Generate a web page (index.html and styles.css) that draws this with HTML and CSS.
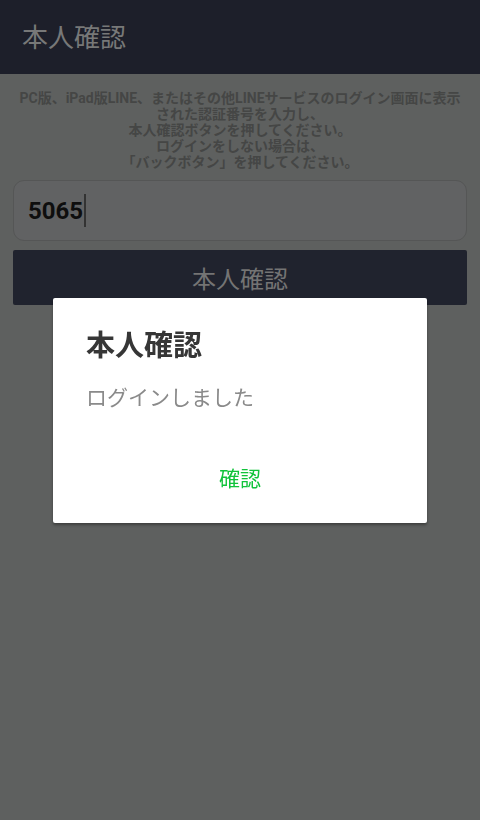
FILE: index.html
```html
<!DOCTYPE html>
<html lang="ja">
<head>
<meta charset="utf-8">
<link rel="stylesheet" href="styles.css">
</head>
<body>
<div class="page">
  <header class="appbar">本人確認</header>
  <main class="content">
    <p class="desc">PC版、iPad版LINE、またはその他LINEサービスのログイン画面に表示<br>された認証番号を入力し、<br>本人確認ボタンを押してください。<br>ログインをしない場合は、<br>「バックボタン」を押してください。</p>
    <div class="field"><span class="code">5065</span><span class="caret"></span></div>
    <div class="btn">本人確認</div>
  </main>
</div>
<div class="overlay">
  <div class="dialog">
    <h2 class="dlg-title">本人確認</h2>
    <p class="dlg-msg">ログインしました</p>
    <div class="dlg-actions"><span class="dlg-btn">確認</span></div>
  </div>
</div>
</body>
</html>
```
FILE: styles.css
```css
html, body {
  margin: 0;
  padding: 0;
  height: 100%;
}
body {
  background: #5e605f;
  font-family: "Roboto", "Noto Sans CJK JP", sans-serif;
  width: 480px;
  height: 820px;
  overflow: hidden;
}
.page {
  display: flex;
  flex-direction: column;
}
.appbar {
  height: 74px;
  background: #1d1f2a;
  color: #777878;
  font-family: "Noto Sans CJK JP", sans-serif;
  font-size: 26px;
  display: flex;
  align-items: center;
  padding-left: 22px;
  padding-bottom: 3px;
  box-sizing: border-box;
}
.content {
  padding: 16px 13px 0 13px;
  display: flex;
  flex-direction: column;
}
.desc {
  margin: 0;
  text-align: center;
  color: #454645;
  font-weight: bold;
  font-size: 14px;
  line-height: 16px;
  font-family: "Roboto", "Noto Sans CJK JP", sans-serif;
}
.field {
  margin-top: 10px;
  height: 61px;
  box-sizing: border-box;
  border: 1px solid #555656;
  border-radius: 11px;
  background: #616263;
  display: flex;
  align-items: center;
  padding-left: 14px;
}
.code {
  font-family: "Roboto", sans-serif;
  font-weight: bold;
  font-size: 24px;
  color: #0e0e0e;
}
.caret {
  width: 2px;
  height: 33px;
  background: #333;
  margin-left: 1px;
}
.btn {
  margin-top: 9px;
  height: 55px;
  background: #20232e;
  border-radius: 2px;
  color: #747474;
  font-family: "Noto Sans CJK JP", sans-serif;
  font-size: 24px;
  display: flex;
  align-items: center;
  justify-content: center;
}
.overlay {
  position: fixed;
  inset: 0;
  display: flex;
  align-items: center;
  justify-content: center;
}
.dialog {
  width: 374px;
  height: 225px;
  background: #fff;
  border-radius: 2px;
  box-shadow: 0 2px 3px rgba(0,0,0,0.35);
  box-sizing: border-box;
  padding: 26px 33px 0 33px;
  display: flex;
  flex-direction: column;
  font-family: "Noto Sans CJK JP", sans-serif;
}
.dlg-title {
  margin: 0;
  font-size: 29px;
  font-weight: bold;
  color: #363636;
  line-height: 38px;
}
.dlg-msg {
  margin: 19px 0 0 0;
  font-size: 21px;
  color: #8a8a8a;
  line-height: 30px;
}
.dlg-actions {
  margin-top: 51px;
  display: flex;
  justify-content: center;
}
.dlg-btn {
  color: #10c33a;
  font-size: 21px;
  line-height: 30px;
}
```
